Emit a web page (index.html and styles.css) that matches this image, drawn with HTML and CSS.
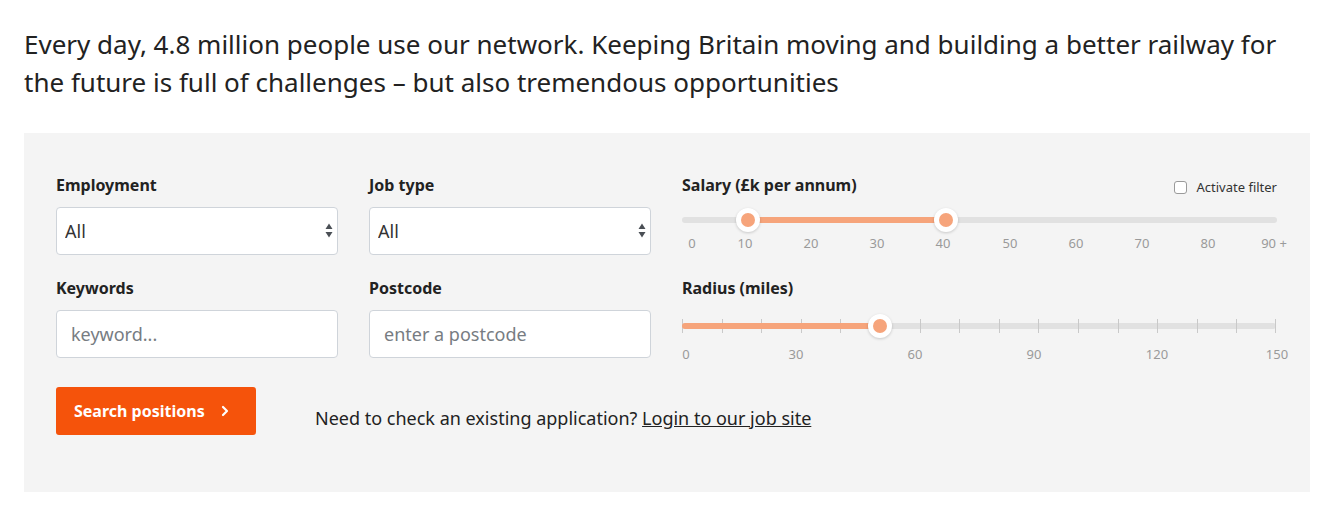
FILE: index.html
```html
<!DOCTYPE html>
<html lang="en">
<head>
<meta charset="utf-8">
<title>Job search</title>
<link rel="stylesheet" href="styles.css">
</head>
<body>
<div class="page">
  <p class="intro">Every day, 4.8 million people use our network. Keeping Britain moving and building a better railway for the future is full of challenges – but also tremendous opportunities</p>

  <section class="panel">
    <div class="grid">
      <div class="field">
        <label class="label" for="employment">Employment</label>
        <div class="select-wrap">
          <select id="employment" class="control select"><option>All</option></select>
          <svg class="arrows" width="8" height="16" viewBox="0 0 8 16"><path d="M4 0.5 L7.5 6 L0.5 6 Z M0.5 9 L7.5 9 L4 14.5 Z" fill="#4a4f55"/></svg>
        </div>
      </div>
      <div class="field">
        <label class="label" for="jobtype">Job type</label>
        <div class="select-wrap">
          <select id="jobtype" class="control select"><option>All</option></select>
          <svg class="arrows" width="8" height="16" viewBox="0 0 8 16"><path d="M4 0.5 L7.5 6 L0.5 6 Z M0.5 9 L7.5 9 L4 14.5 Z" fill="#4a4f55"/></svg>
        </div>
      </div>
      <div class="field">
        <div class="label-row">
          <span class="label">Salary (£k per annum)</span>
          <label class="check"><span class="box"></span>Activate filter</label>
        </div>
        <div class="slider salary">
          <div class="track">
            <div class="fill" style="left:11.11%;width:33.33%"></div>
            <span class="handle" style="left:11.11%"></span>
            <span class="handle" style="left:44.44%"></span>
          </div>
          <div class="scale">
            <span style="left:10px">0</span>
            <span style="left:63px">10</span>
            <span style="left:129px">20</span>
            <span style="left:195px">30</span>
            <span style="left:261px">40</span>
            <span style="left:328px">50</span>
            <span style="left:394px">60</span>
            <span style="left:460px">70</span>
            <span style="left:526px">80</span>
            <span style="left:592px">90 +</span>
          </div>
        </div>
      </div>

      <div class="field">
        <label class="label" for="keywords">Keywords</label>
        <input id="keywords" class="control text" type="text" placeholder="keyword...">
      </div>
      <div class="field">
        <label class="label" for="postcode">Postcode</label>
        <input id="postcode" class="control text" type="text" placeholder="enter a postcode">
      </div>
      <div class="field">
        <div class="label-row">
          <span class="label">Radius (miles)</span>
        </div>
        <div class="slider radius">
          <div class="track">
            <i class="tick" style="left:0px"></i>
            <i class="tick" style="left:39.6px"></i>
            <i class="tick" style="left:79.2px"></i>
            <i class="tick" style="left:118.8px"></i>
            <i class="tick" style="left:158.4px"></i>
            <i class="tick" style="left:198px"></i>
            <i class="tick" style="left:237.6px"></i>
            <i class="tick" style="left:277.2px"></i>
            <i class="tick" style="left:316.8px"></i>
            <i class="tick" style="left:356.4px"></i>
            <i class="tick" style="left:396px"></i>
            <i class="tick" style="left:435.6px"></i>
            <i class="tick" style="left:475.2px"></i>
            <i class="tick" style="left:514.8px"></i>
            <i class="tick" style="left:554.4px"></i>
            <i class="tick" style="left:593px"></i>
            <div class="fill" style="left:0;width:33.4%"></div>
            <span class="handle" style="left:33.4%"></span>
          </div>
          <div class="scale">
            <span style="left:4px">0</span>
            <span style="left:114px">30</span>
            <span style="left:233px">60</span>
            <span style="left:352px">90</span>
            <span style="left:475px">120</span>
            <span style="left:595px">150</span>
          </div>
        </div>
      </div>
    </div>

    <div class="actions">
      <button class="btn" type="button">Search positions
        <svg class="chev" width="8" height="12" viewBox="0 0 8 12"><path d="M2 2 L6 6 L2 10" fill="none" stroke="#fff" stroke-width="2.2" stroke-linecap="round" stroke-linejoin="round"/></svg>
      </button>
      <p class="existing">Need to check an existing application? <a href="#">Login to our job site</a></p>
    </div>
  </section>
</div>
</body>
</html>
```

FILE: styles.css
```css
* { box-sizing: border-box; }
html, body { margin: 0; padding: 0; background: #fff; }
body {
  font-family: "Noto Sans", "Open Sans", "DejaVu Sans", sans-serif;
  color: #222;
}
.page {
  width: 1286px;
  margin-left: 24px;
  padding-top: 25px;
}
.intro {
  margin: 0;
  font-size: 26px;
  line-height: 38px;
  color: #222;
}
.panel {
  margin-top: 32px;
  background: #f4f4f4;
  padding: 41px 32px 57px;
}
.grid {
  display: grid;
  grid-template-columns: 282px 282px 1fr;
  column-gap: 31px;
  row-gap: 22px;
}
.field { display: flex; flex-direction: column; }
.label {
  display: block;
  font-size: 16px;
  font-weight: 700;
  line-height: 23px;
  height: 23px;
  color: #222;
  margin-bottom: 10px;
}
.label-row {
  display: flex;
  justify-content: space-between;
  align-items: flex-start;
  height: 23px;
}
.label-row .label { margin-bottom: 0; }
.check {
  display: flex;
  align-items: center;
  font-size: 13px;
  line-height: 23px;
  color: #333;
  margin-top: 2px;
  margin-right: 1px;
}
.box {
  width: 13px;
  height: 13px;
  border: 1px solid #9a9a9a;
  border-radius: 3px;
  background: #fff;
  margin-right: 10px;
}
.select-wrap { position: relative; }
.control {
  display: block;
  width: 100%;
  height: 48px;
  border: 1px solid #cfd4da;
  border-radius: 4px;
  background: #fff;
  font-family: inherit;
  font-size: 18px;
  color: #333;
  margin: 0;
  outline: none;
}
.select {
  appearance: none;
  -webkit-appearance: none;
  padding: 0 24px 0 8px;
}
.text { padding: 0 14px; }
.text::placeholder { color: #777c82; opacity: 1; }
.arrows {
  position: absolute;
  right: 5px;
  top: 16px;
  pointer-events: none;
}

.slider { position: relative; }
.salary { padding-top: 20px; }
.radius { padding-top: 23px; }
.track {
  position: relative;
  height: 6px;
  border-radius: 3px;
  background: #e1e1e1;
}
.salary .track { width: 595px; }
.radius .track { width: 594px; }
.fill {
  position: absolute;
  top: 0;
  bottom: 0;
  background: #f6a47b;
  border-radius: 3px;
}
.tick {
  position: absolute;
  top: -4px;
  width: 1px;
  height: 14px;
  background: #c9c9c9;
}
.handle {
  position: absolute;
  top: 50%;
  width: 24px;
  height: 24px;
  margin-left: -12px;
  margin-top: -12px;
  border-radius: 50%;
  background: #fff;
  box-shadow: 0 1px 3px rgba(0,0,0,0.18);
  z-index: 2;
}
.handle::after {
  content: "";
  position: absolute;
  left: 5px;
  top: 5px;
  width: 14px;
  height: 14px;
  border-radius: 50%;
  background: #f6a47b;
}
.scale {
  position: relative;
  height: 18px;
  font-size: 13px;
  line-height: 18px;
  color: #9a9a9a;
}
.salary .scale { margin-top: 11px; }
.radius .scale { margin-top: 16px; }
.scale span {
  position: absolute;
  top: 0;
  transform: translateX(-50%);
  white-space: nowrap;
}

.actions {
  display: flex;
  align-items: flex-start;
  margin-top: 24px;
}
.btn {
  display: flex;
  align-items: center;
  height: 48px;
  width: 200px;
  padding: 0 0 0 18px;
  border: 0;
  border-radius: 3px;
  background: #f5530b;
  color: #fff;
  font-family: inherit;
  font-size: 16px;
  font-weight: 700;
}
.chev { margin-left: 16px; }
.existing {
  margin: 19px 0 0 59px;
  font-size: 18px;
  line-height: 24px;
  color: #222;
}
.existing a { color: #222; text-decoration: underline; }
```
